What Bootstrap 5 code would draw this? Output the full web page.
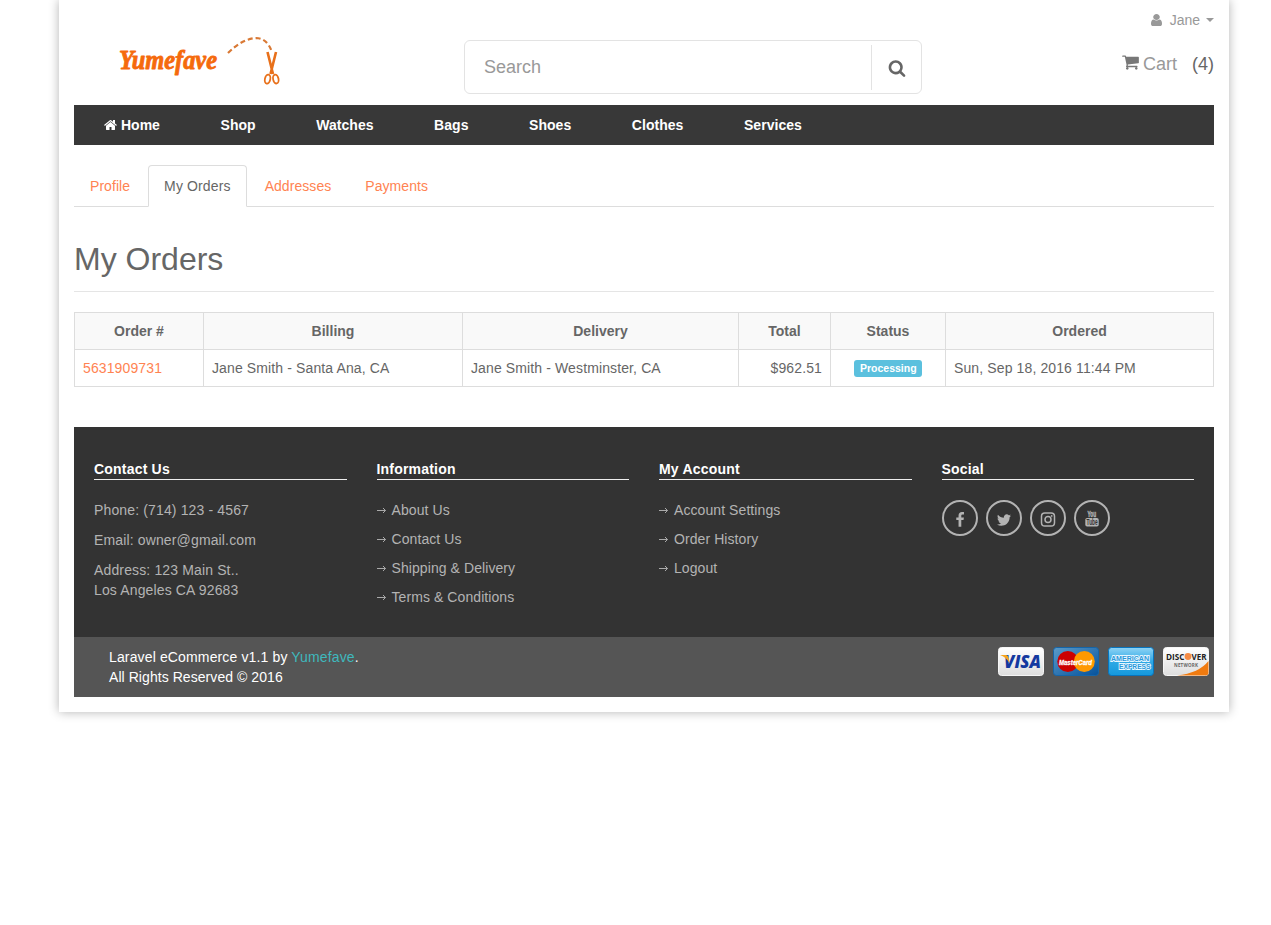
<!DOCTYPE html>
<html lang="en">
<head>
<meta charset="utf-8">
<meta name="viewport" content="width=device-width, initial-scale=1">
<title>My Orders</title>
<link href="https://cdn.jsdelivr.net/npm/bootstrap@5.3.0/dist/css/bootstrap.min.css" rel="stylesheet">
<style>
body{font:14px/20px "Liberation Sans",Arial,sans-serif;color:#666;background:#fff;min-height:925px}
a{text-decoration:none;color:#ff8352}
.shell{width:1170px;margin-left:59px;height:712px;padding:0 15px;box-shadow:0 0 10px rgba(0,0,0,.3);background:#fff}
.top{height:105px}
.logo-box{width:390px;padding:30px 0 0 35px}
.search{width:458px;height:54px;margin-top:40px;border:1px solid #e3e3e3;border-radius:6px}
.search .form-control{border:0;padding:0 19px;font-size:18px;color:#999;background:none;box-shadow:none}
.search .form-control::placeholder{color:#999;opacity:1}
.search button{width:50px;height:45px;margin-top:4px;border:0;border-left:1px solid #e3e3e3;background:none;padding:0}
.account a{color:#999}
.account{padding-top:10px}
.caret{display:inline-block;border:4px solid transparent;border-top-color:#999;border-bottom:0;margin-left:6px;vertical-align:middle}
.cart{font-size:18px;line-height:26px;margin-top:21px}
.cart .count{padding-left:15px}
.mainnav{height:40px;background:#383838}
.mainnav a{color:#fff;font-weight:700;padding:10px 30.3px;line-height:20px;letter-spacing:.03px}
.mainnav a:first-child{padding-left:30px}
.mainnav svg{vertical-align:-2px}
.tabs{margin-top:20px;border-bottom:1px solid #ddd;height:42px}
.tabs a{color:#ff8352;border:1px solid transparent;border-radius:4px 4px 0 0;padding:10px 15px;height:42px;margin-right:2px;line-height:21px;letter-spacing:.06px}
.tabs a.active{color:#666;background:#fff;border-color:#ddd #ddd #fff;letter-spacing:.13px}
h1{font-size:32px;line-height:36px;font-weight:400;margin:34px 0 20px;padding-bottom:14px;border-bottom:1px solid #e5e5e5;height:51px}
.orders{width:1140px;table-layout:fixed;border-collapse:collapse;margin:0 0 40px}
.orders th,.orders td{border:1px solid #ddd;padding:8px;height:37px;line-height:20px}
.orders td{letter-spacing:.12px}
.orders th{background:#f9f9f9;text-align:center}
.state{display:inline-block;background:#5bc0de;color:#fff;font-weight:700;font-size:10.5px;letter-spacing:0;line-height:17px;height:17px;border-radius:3px;padding:0 6px;vertical-align:1px;width:68px}
.foot{background:#333;height:210px;padding:32px 5px 0;color:#aaa}
.foot .row{--bs-gutter-x:30px;margin:0}
.foot h2{font-size:14px;line-height:20px;font-weight:700;color:#fff;border-bottom:1px solid #eee;margin:0 0 20px;height:21px;letter-spacing:.2px}
.foot p{margin:0 0 10px;color:#b3b3b3;letter-spacing:.14px}
.foot li{height:20px;margin-bottom:9px}
.foot li a{color:#b3b3b3;letter-spacing:.08px}
.foot li svg{margin-right:6px;display:block}
.social a{width:36px;height:36px;border:2px solid #b3b3b3;border-radius:50%;color:#b3b3b3}
.legal{background:#555;height:60px;padding:10px 5px 0 35px;color:#fff}
.legal .owner{letter-spacing:.14px}
.legal .rights{letter-spacing:.06px}
.legal a{color:#3fb8bd}
.pay{gap:9px;height:29px}
svg{flex:none}
svg text{letter-spacing:0}
.you{overflow:visible}
</style>
</head>
<body>
<div class="shell">
<header class="top d-flex">
  <a href="#" class="logo-box"><svg width="180" height="62" viewBox="0 0 180 62">
    <text x="10" y="39" font-family="Liberation Serif" font-weight="700" font-style="italic" font-size="27" textLength="98" lengthAdjust="spacingAndGlyphs" fill="#f56a0c" stroke="#f56a0c" stroke-width=".9" stroke-linejoin="round">Yumefave</text>
    <path d="M119 23Q133 9 147 8Q158 8 163 22" fill="none" stroke="#d97935" stroke-width="2.200" stroke-dasharray="5 3"/>
    <g fill="none" stroke="#e8701a"><path d="M158.500 22L164 44M167 22L161.500 44" stroke-width="2.600"/><ellipse cx="158.600" cy="49" rx="2.700" ry="4.500" transform="rotate(12 158 49)" stroke-width="1.800"/><ellipse cx="166.800" cy="49" rx="2.700" ry="4.500" transform="rotate(-12 167 49)" stroke-width="1.800"/></g>
  </svg></a>
  <form class="search d-flex">
    <input class="form-control" type="text" placeholder="Search" aria-label="Search">
    <button type="button" class="flex-shrink-0 d-flex align-items-center justify-content-center" aria-label="Go"><svg width="18" height="18" viewBox="0 0 1792 1792" fill="#666"><path d="M1216 832q0-185-131.500-316.500t-316.500-131.500-316.500 131.500-131.500 316.500 131.500 316.500 316.500 131.500 316.500-131.500 131.500-316.500zm512 832q0 52-38 90t-90 38q-54 0-90-38l-343-342q-179 124-399 124-143 0-273.500-55.500t-225-150-150-225-55.500-273.500 55.500-273.500 150-225 225-150 273.500-55.500 273.500 55.500 225 150 150 225 55.500 273.500q0 220-124 399l343 343q37 37 37 90z"/></svg></button>
  </form>
  <div class="account ms-auto text-end">
    <a href="#" class="d-flex align-items-center justify-content-end"><svg class="me-2" width="11" height="14" viewBox="256 0 1280 1792" preserveAspectRatio="none" fill="#999"><path d="M1536 1399q0 109-62.500 187t-150.500 78h-854q-88 0-150.500-78t-62.500-187q0-85 8.500-160.500t31.500-152 58.500-131 94-89 134.500-34.500q131 128 313 128t313-128q76 0 134.500 34.500t94 89 58.500 131 31.500 152 8.500 160.500zm-256-887q0 159-112.500 271.500t-271.500 112.500-271.500-112.500-112.500-271.500 112.500-271.500 271.500-112.500 271.500 112.500 112.500 271.500z"/></svg><span>Jane</span><span class="caret"></span></a>
    <div class="cart d-flex align-items-center"><a href="#" class="d-flex align-items-center"><svg width="17" height="18" viewBox="64 0 1664 1792" fill="#777" class="me-1 mb-1"><path d="M704 1536q0 52-38 90t-90 38-90-38-38-90 38-90 90-38 90 38 38 90zm896 0q0 52-38 90t-90 38-90-38-38-90 38-90 90-38 90 38 38 90zm128-1088v512q0 24-16.500 42.500t-40.500 21.500l-1044 122q13 60 13 70 0 16-24 64h920q26 0 45 19t19 45-19 45-45 19h-1024q-26 0-45-19t-19-45q0-11 8-31.500t16-36 21.500-40 15.500-29.500l-177-823h-204q-26 0-45-19t-19-45 19-45 45-19h256q16 0 28.500 6.500t19.500 15.500 13 24.500 8 26 5.500 29.500 4.500 26h1201q26 0 45 19t19 45z"/></svg>Cart</a><span class="count">(4)</span></div>
  </div>
</header>
<nav class="mainnav d-flex">
  <a href="#"><svg width="13" height="14" viewBox="64 0 1664 1792" fill="#fff"><path d="M1472 992v480q0 26-19 45t-45 19h-384v-384h-256v384h-384q-26 0-45-19t-19-45v-480q0-1 .5-3t.5-3l575-474 575 474q1 2 1 6zm223-69l-62 74q-8 9-21 11h-3q-13 0-21-7l-692-577-692 577q-12 8-24 7-13-2-21-11l-62-74q-8-10-7-23.500t11-21.500l719-599q32-26 76-26t76 26l244 204v-195q0-14 9-23t23-9h192q14 0 23 9t9 23v408l219 182q10 8 11 21.500t-7 23.500z"/></svg> Home</a><a href="#">Shop</a><a href="#">Watches</a><a href="#">Bags</a><a href="#">Shoes</a><a href="#">Clothes</a><a href="#">Services</a>
</nav>
<div class="tabs d-flex"><a href="#">Profile</a><a href="#" class="active">My Orders</a><a href="#">Addresses</a><a href="#">Payments</a></div>
<h1>My Orders</h1>
<table class="orders">
  <colgroup><col style="width:129px"><col style="width:259px"><col style="width:276px"><col style="width:92px"><col style="width:115px"><col></colgroup>
  <thead><tr><th>Order #</th><th>Billing</th><th>Delivery</th><th>Total</th><th>Status</th><th>Ordered</th></tr></thead>
  <tbody><tr><td><a href="#">5631909731</a></td><td>Jane Smith - Santa Ana, CA</td><td>Jane Smith - Westminster, CA</td><td class="text-end">$962.51</td><td class="text-center py-0"><span class="state">Processing</span></td><td>Sun, Sep 18, 2016 11:44 PM</td></tr></tbody>
</table>
<svg width="0" height="0" class="d-block"><defs><symbol id="arrow" viewBox="0 0 9 9"><path d="M0 4.500H8.500M6 2L8.500 4.500L6 7" fill="none" stroke="#aaa"/></symbol>
<linearGradient id="gw" x2="0" y2="1"><stop stop-color="#fff"/><stop offset="1" stop-color="#dedede"/></linearGradient>
<linearGradient id="gm" x1="0" x2="1" y2="1"><stop stop-color="#5b9bc9"/><stop offset="1" stop-color="#06529b"/></linearGradient>
<linearGradient id="ga" x2="0" y2="1"><stop stop-color="#8fd3f5"/><stop offset=".5" stop-color="#2fa9e5"/><stop offset="1" stop-color="#1598dc"/></linearGradient></defs></svg>
<footer>
  <div class="foot"><div class="row">
    <div class="col-3"><h2>Contact Us</h2><p>Phone: (714) 123 - 4567</p><p>Email: owner@gmail.com</p><p>Address: 123 Main St..<br>Los Angeles CA 92683</p></div>
    <div class="col-3"><h2>Information</h2><ul class="list-unstyled m-0">
      <li class="d-flex align-items-center"><svg width="9" height="9"><use href="#arrow"/></svg><a href="#">About Us</a></li>
      <li class="d-flex align-items-center"><svg width="9" height="9"><use href="#arrow"/></svg><a href="#">Contact Us</a></li>
      <li class="d-flex align-items-center"><svg width="9" height="9"><use href="#arrow"/></svg><a href="#">Shipping &amp; Delivery</a></li>
      <li class="d-flex align-items-center"><svg width="9" height="9"><use href="#arrow"/></svg><a href="#">Terms &amp; Conditions</a></li></ul></div>
    <div class="col-3"><h2>My Account</h2><ul class="list-unstyled m-0">
      <li class="d-flex align-items-center"><svg width="9" height="9"><use href="#arrow"/></svg><a href="#">Account Settings</a></li>
      <li class="d-flex align-items-center"><svg width="9" height="9"><use href="#arrow"/></svg><a href="#">Order History</a></li>
      <li class="d-flex align-items-center"><svg width="9" height="9"><use href="#arrow"/></svg><a href="#">Logout</a></li></ul></div>
    <div class="col-3"><h2>Social</h2><div class="social d-flex gap-2">
      <a href="#" class="d-flex align-items-center justify-content-center" aria-label="Facebook"><svg class="mt-1" width="16" height="16" viewBox="0 0 1792 1792" fill="currentColor"><path d="M1343 12v264h-157q-86 0-116 36t-30 108v189h293l-39 296h-254v759h-306v-759h-255v-296h255v-218q0-186 104-288.500t277-102.500q147 0 228 12z"/></svg></a>
      <a href="#" class="d-flex align-items-center justify-content-center" aria-label="Twitter"><svg class="mt-1" width="16" height="16" viewBox="0 0 1792 1792" fill="currentColor"><path d="M1684 408q-67 98-162 167 1 14 1 42 0 130-38 259.500t-115.500 248.500-184.500 210.500-258 146-323 54.500q-271 0-496-145 35 4 78 4 225 0 401-138-105-2-188-64.500t-114-159.500q33 5 61 5 43 0 85-11-112-23-185.500-111.500t-73.500-205.500v-4q68 38 146 41-66-44-105-115t-39-154q0-88 44-163 121 149 294.500 238.500t371.500 99.500q-8-38-8-74 0-134 94.500-228.500t228.500-94.500q140 0 236 102 109-21 205-78-37 115-142 178 93-10 186-50z"/></svg></a>
      <a href="#" class="d-flex align-items-center justify-content-center" aria-label="Instagram"><svg class="mt-1" width="16" height="16" viewBox="0 0 16 16" fill="none" stroke="currentColor" stroke-width="1.500"><rect x="1.500" y="1" width="13" height="13" rx="3.300"/><circle cx="8" cy="7.500" r="3"/><circle cx="11.700" cy="3.900" r=".85" fill="currentColor" stroke="none"/></svg></a>
      <a href="#" class="d-flex align-items-center justify-content-center" aria-label="YouTube"><svg class="you" width="16" height="18" viewBox="0 0 16 18" fill="currentColor" font-family="Liberation Sans" font-weight="700"><g transform="translate(3.500 8) scale(.56 1)"><text font-size="8.500" stroke="currentColor" stroke-width=".4">You</text></g><rect x="1.300" y="9" width="13.400" height="8.500" rx="1.800"/><g transform="translate(2.600 16.300) scale(.56 1)"><text font-size="8.500" fill="#333">Tube</text></g></svg></a>
    </div></div>
  </div></div>
  <div class="legal d-flex justify-content-between"><div><span class="owner">Laravel eCommerce v1.1 by <a href="#">Yumefave</a>.</span><br><span class="rights">All Rights Reserved © 2016</span></div>
    <div class="pay d-flex">
      <svg width="46" height="29" viewBox="0 0 46 29"><rect x=".5" y=".5" width="45" height="28" rx="3" fill="url(#gw)" stroke="#f5f5f5"/><text x="6" y="20.500" font-family="Open Sans" font-weight="800" font-style="italic" font-size="17" textLength="37" lengthAdjust="spacingAndGlyphs" fill="#1439a0">VISA</text><path d="M2 8H8Q10 8 10.500 10.500L11.500 16Q8 10 2 8Z" fill="#f7a51c"/></svg>
      <svg width="46" height="29" viewBox="0 0 46 29"><rect x=".5" y=".5" width="45" height="28" rx="3" fill="url(#gm)" stroke="#1565a8"/><circle cx="14.800" cy="14.500" r="10.500" fill="#c00"/><circle cx="31.300" cy="14.500" r="10.500" fill="#f90"/><text x="6" y="17.500" font-family="Liberation Sans" font-weight="700" font-style="italic" font-size="7.500" textLength="33" lengthAdjust="spacingAndGlyphs" fill="#fff" stroke="#fff" stroke-width=".3">MasterCard</text></svg>
      <svg width="46" height="29" viewBox="0 0 46 29"><rect x=".5" y=".5" width="45" height="28" rx="3" fill="url(#ga)" stroke="#0874bd"/><g font-family="Liberation Sans" font-weight="700" font-size="7.500" fill="#2b98da" stroke="#e8f7ff" stroke-width="1.800" paint-order="stroke"><text x="3" y="13.800" textLength="38" lengthAdjust="spacingAndGlyphs">AMERICAN</text><text x="11" y="22" textLength="31.500" lengthAdjust="spacingAndGlyphs">EXPRESS</text></g></svg>
      <svg width="46" height="29" viewBox="0 0 46 29"><rect x=".5" y=".5" width="45" height="28" rx="3" fill="url(#gw)" stroke="#f5f5f5"/><path d="M45.500 14V25.500Q45.500 28.500 42.500 28.500H14Q36 26 45.500 14Z" fill="#f07b10"/><g font-family="Open Sans" font-weight="700" fill="#222"><text x="3" y="12.500" font-size="9" textLength="18.500" lengthAdjust="spacingAndGlyphs">DISC</text><text x="28.500" y="12.500" font-size="9" textLength="15" lengthAdjust="spacingAndGlyphs">VER</text><text x="11" y="19.500" font-size="4.500" textLength="24" fill="#666">NETWORK</text></g><circle cx="25" cy="9.500" r="3.400" fill="#f58b45"/></svg>
    </div></div>
</footer>
</div>
<script src="https://cdn.jsdelivr.net/npm/bootstrap@5.3.0/dist/js/bootstrap.bundle.min.js"></script>
</body>
</html>
